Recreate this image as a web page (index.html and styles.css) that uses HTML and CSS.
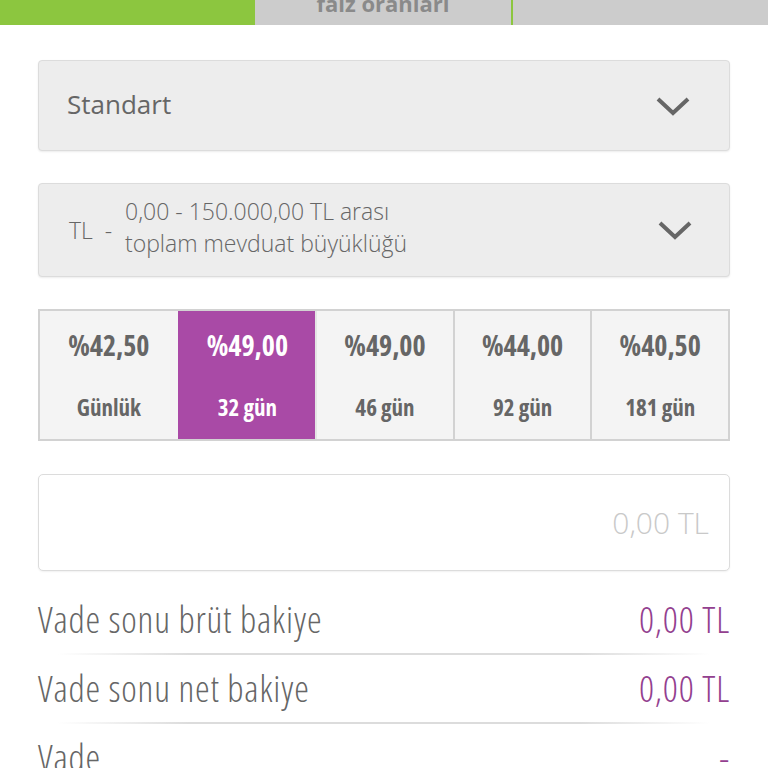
FILE: index.html
```html
<!DOCTYPE html>
<html lang="tr">
<head>
    <meta charset="UTF-8">
    <meta name="viewport" content="width=device-width, initial-scale=1.0">
    <title>Mevduat Hesaplama</title>
    <link rel="stylesheet" href="styles.css">
</head>
<body>
  <div id="tabs">
    <div class="tab active"></div>
    <div class="tab"><span class="tab-label">faiz oranları</span></div>
    <div class="tab last"></div>
  </div>

  <div id="content">
    <div class="select">
      <span class="select-text">Standart</span>
      <svg class="chevron" width="36" height="22" viewBox="0 0 36 22"><path d="M3 4 L18 18 L33 4" fill="none" stroke="#666" stroke-width="4"/></svg>
    </div>

    <div class="select tall">
      <span class="currency">TL&nbsp;&nbsp;-</span>
      <span class="range">0,00 - 150.000,00 TL arası<br>toplam mevduat büyüklüğü</span>
      <svg class="chevron" width="36" height="22" viewBox="0 0 36 22"><path d="M3 4 L18 18 L33 4" fill="none" stroke="#666" stroke-width="4"/></svg>
    </div>

    <div class="rates">
      <div class="rate"><div class="pct">%42,50</div><div class="term">Günlük</div></div>
      <div class="rate selected"><div class="pct">%49,00</div><div class="term">32 gün</div></div>
      <div class="rate"><div class="pct">%49,00</div><div class="term">46 gün</div></div>
      <div class="rate"><div class="pct">%44,00</div><div class="term">92 gün</div></div>
      <div class="rate"><div class="pct">%40,50</div><div class="term">181 gün</div></div>
    </div>

    <input type="text" class="amount" placeholder="0,00 TL">

    <div class="result">
      <span>Vade sonu brüt bakiye</span>
      <span class="value">0,00 TL</span>
    </div>
    <div class="result">
      <span>Vade sonu net bakiye</span>
      <span class="value">0,00 TL</span>
    </div>
    <div class="result">
      <span>Vade</span>
      <span class="value">-</span>
    </div>
  </div>
</body>
</html>
```

FILE: styles.css
```css
* {
    box-sizing: border-box;
}

body {
    font-family: "Open Sans", "DejaVu Sans", sans-serif;
    font-weight: 300;
    background-color: #fff;
    color: #666;
    margin: 0;
    padding: 0;
    overflow: hidden;
}

#tabs {
    display: flex;
    height: 25px;
    overflow: hidden;
}

.tab {
    flex: 1;
    background-color: #cccccc;
    text-align: center;
}

.tab.active {
    background-color: #8cc63f;
}

.tab.last {
    border-left: 2px solid #8cc63f;
}

.tab-label {
    display: block;
    margin-top: -12px;
    font-size: 22px;
    font-weight: bold;
    color: #8a8a8a;
}

#content {
    padding: 35px 38px 0 38px;
}

.select {
    display: flex;
    align-items: center;
    height: 91px;
    padding: 0 38px 0 28px;
    background-color: #ededed;
    border: 1px solid #dcdcdc;
    border-radius: 4px;
    margin-bottom: 32px;
    box-shadow: 0 1px 2px rgba(0, 0, 0, 0.08);
}

.select-text {
    flex: 1;
    font-size: 26px;
    font-weight: 400;
    margin-top: -3px;
}

.select.tall {
    height: 94px;
    padding-left: 30px;
    padding-right: 36px;
}

.currency {
    font-size: 23px;
    width: 56px;
}

.range {
    flex: 1;
    font-size: 23px;
    line-height: 32px;
    margin-top: -7px;
}

.rates {
    display: grid;
    grid-template-columns: repeat(5, 1fr);
    height: 132px;
    border: 2px solid #d2d2d2;
    background-color: #f4f4f4;
    margin-bottom: 33px;
}

.rate {
    display: flex;
    flex-direction: column;
    align-items: center;
    border-left: 2px solid #d2d2d2;
    font-weight: bold;
    font-stretch: 75%;
    color: #666;
}

.rate:first-child {
    border-left: none;
}

.rate.selected {
    background-color: #a94aa6;
    color: #fff;
    border-left-color: #a94aa6;
}

.rate.selected + .rate {
    border-left-color: #e4e4e4;
}

.pct {
    font-size: 28px;
    margin-top: 15px;
}

.term {
    font-size: 23px;
    margin-top: 27px;
}

.amount {
    display: block;
    width: 100%;
    height: 97px;
    border: 1px solid #dcdcdc;
    border-radius: 5px;
    padding: 0 20px;
    text-align: right;
    font-family: inherit;
    font-weight: 300;
    font-size: 30px;
    color: #666;
    margin: 0 0 15px 0;
    box-shadow: 0 1px 2px rgba(0, 0, 0, 0.06);
}

.amount::placeholder {
    color: #c9c9c9;
}

.result {
    display: flex;
    justify-content: space-between;
    align-items: center;
    height: 69px;
    font-size: 37px;
    font-stretch: 75%;
    letter-spacing: 0.8px;
    position: relative;
}

.result span {
    margin-top: -4px;
}

.result::after {
    content: "";
    position: absolute;
    left: 20px;
    right: 20px;
    bottom: 0;
    height: 2px;
    background: linear-gradient(to right, rgba(220,220,220,0), #dcdcdc 20%, #dcdcdc 80%, rgba(220,220,220,0));
}

.result:last-child::after {
    display: none;
}

.value {
    color: #93408f;
}
```
